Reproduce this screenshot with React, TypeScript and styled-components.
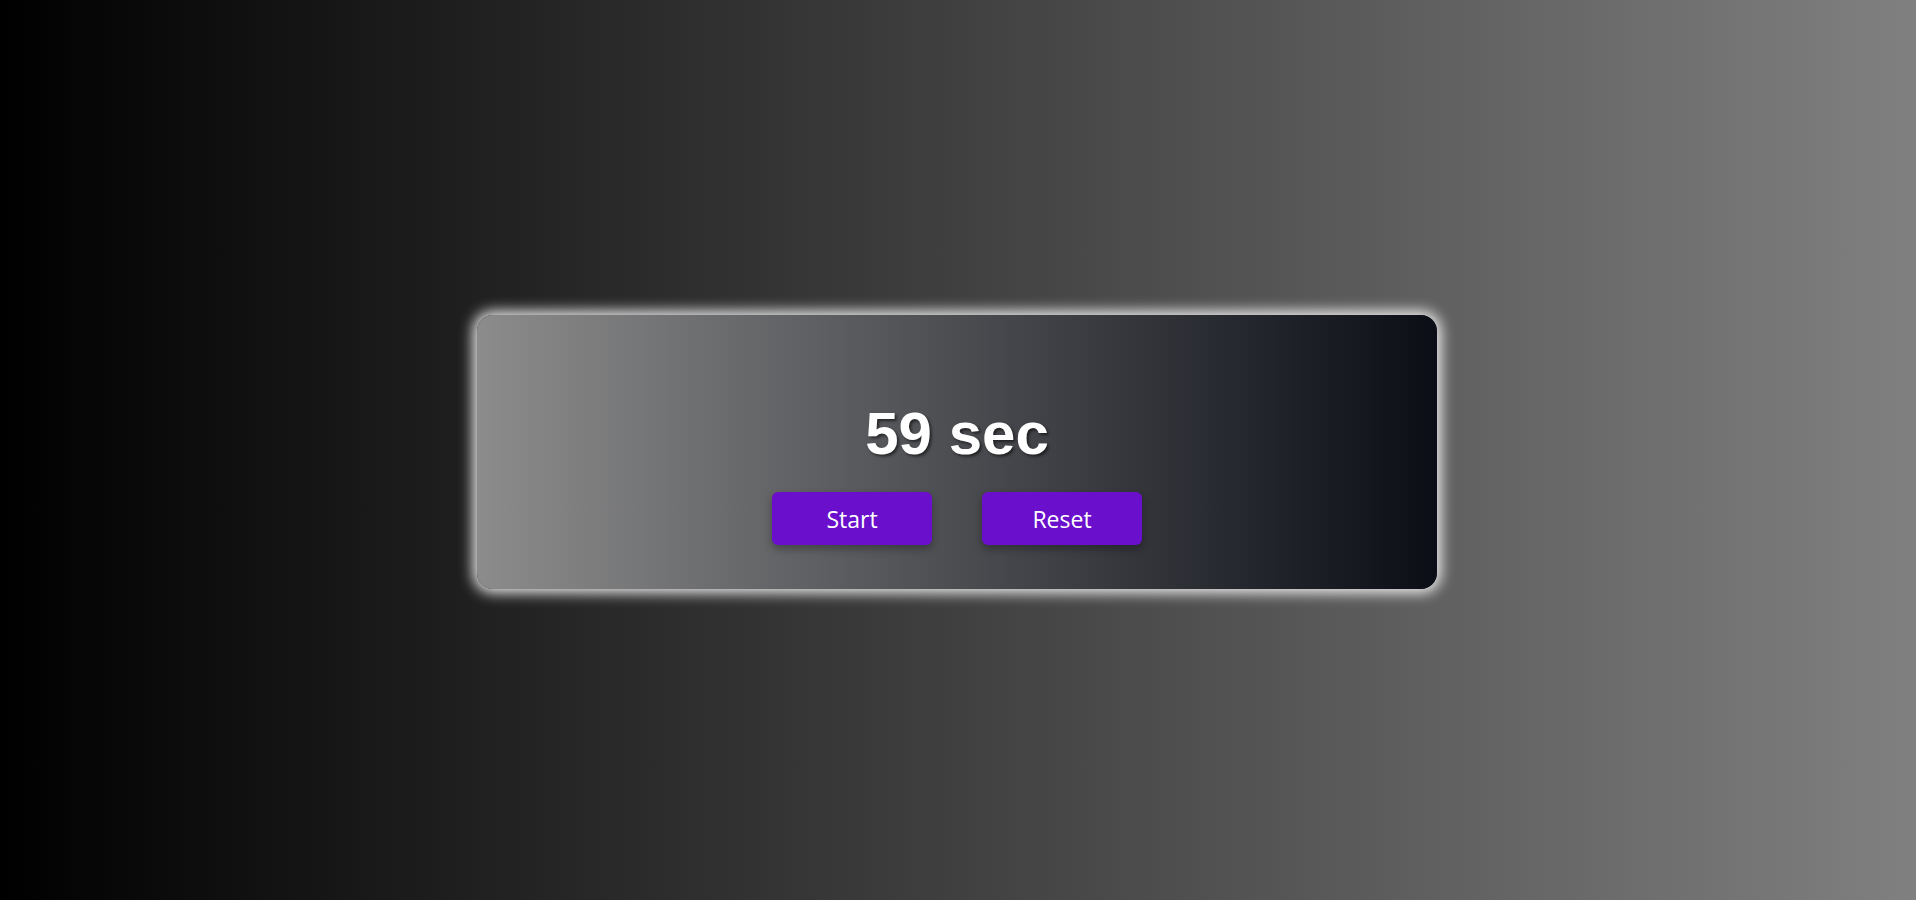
import React, { useState } from "react";
import styled, { createGlobalStyle } from "styled-components";

const GlobalStyle = createGlobalStyle`
  html, body {
    margin: 0;
    padding: 0;
    height: 100%;
  }
  #root {
    height: 100%;
  }
`;

const Page = styled.div`
  height: 100vh;
  display: flex;
  align-items: center;
  justify-content: center;
  background: linear-gradient(to right, #000000, #808080);
`;

const TimerCard = styled.div`
  box-sizing: border-box;
  width: 960px;
  height: 274px;
  margin-left: -2px;
  margin-top: 4px;
  padding-top: 84px;
  display: flex;
  flex-direction: column;
  align-items: center;
  gap: 24px;
  border-radius: 16px;
  background: linear-gradient(to right, #8c8c8c, #0b0e16);
  box-shadow: 0 0 14px 4px rgba(255, 255, 255, 0.9);
`;

const Time = styled.h1`
  margin: 0;
  font-family: "Liberation Sans", Arial, sans-serif;
  font-size: 60px;
  font-weight: bold;
  color: #ffffff;
  text-shadow: 2px 2px 3px rgba(0, 0, 0, 0.55);
`;

const ButtonRow = styled.div`
  display: flex;
  gap: 50px;
`;

const ActionButton = styled.button`
  width: 160px;
  height: 53px;
  border: none;
  border-radius: 6px;
  background: #6a0fcc;
  color: #ffffff;
  font-family: "Open Sans", sans-serif;
  font-size: 23px;
  cursor: pointer;
  box-shadow: 0 4px 8px rgba(0, 0, 0, 0.3);
`;

export default function App() {
  const [seconds, setSeconds] = useState(59);

  return (
    <>
      <GlobalStyle />
      <Page>
        <TimerCard>
          <Time>{seconds} sec</Time>
          <ButtonRow>
            <ActionButton onClick={() => setSeconds((s) => Math.max(0, s - 1))}>
              Start
            </ActionButton>
            <ActionButton onClick={() => setSeconds(59)}>Reset</ActionButton>
          </ButtonRow>
        </TimerCard>
      </Page>
    </>
  );
}
